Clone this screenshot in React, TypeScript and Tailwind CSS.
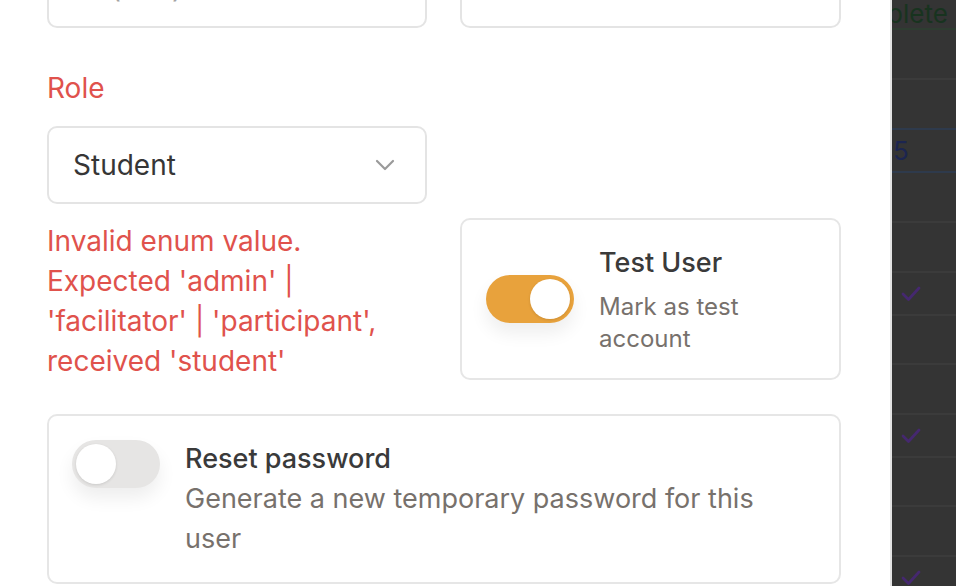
import { useState } from "react";

type Row = { h: string; line: string; content?: "plete" | "five" | "check" };

// dimmed table behind the sheet
const rows: Row[] = [
  { h: "h-[30px]", line: "border-[#2e3d31]", content: "plete" },
  { h: "h-[50px]", line: "border-[#3b3b3b]" },
  { h: "h-[50px]", line: "border-[#2e3a4c]" },
  { h: "h-[43px]", line: "border-[#2e3a4c]", content: "five" },
  { h: "h-[50px]", line: "border-[#3b3b3b]" },
  { h: "h-[50px]", line: "border-[#3b3b3b]" },
  { h: "h-[43px]", line: "border-[#3b3b3b]", content: "check" },
  { h: "h-[49px]", line: "border-[#3b3b3b]" },
  { h: "h-[50px]", line: "border-[#3b3b3b]" },
  { h: "h-[43px]", line: "border-[#3b3b3b]", content: "check" },
  { h: "h-[49px]", line: "border-[#3b3b3b]" },
  { h: "h-[50px]", line: "border-[#3b3b3b]" },
  { h: "h-[43px]", line: "border-[#3b3b3b]", content: "check" },
];

function Check() {
  return (
    <svg width="20" height="16" viewBox="0 0 20 16" fill="none">
      <path d="M2 8 7.5 13.5 18 2" stroke="#45286f" strokeWidth="2.8" strokeLinecap="round" strokeLinejoin="round" />
    </svg>
  );
}

function Toggle({ on, onChange }: { on: boolean; onChange: () => void }) {
  return (
    <button
      type="button"
      onClick={onChange}
      className={
        "relative h-[48px] w-[88px] shrink-0 rounded-full shadow-[0_10px_18px_rgba(0,0,0,0.07)] " +
        (on ? "bg-[#e8a23c]" : "bg-[#e6e5e4]")
      }
    >
      <span
        className={
          "absolute top-[4px] h-[40px] w-[40px] rounded-full bg-white shadow-[0_1px_3px_rgba(0,0,0,0.12)] " +
          (on ? "left-[44px]" : "left-[4px]")
        }
      />
    </button>
  );
}

export default function App() {
  const [testUser, setTestUser] = useState(true);
  const [resetPw, setResetPw] = useState(false);

  return (
    <div
      className="flex h-[586px] w-[956px] overflow-hidden bg-white"
      style={{ fontFamily: "Inter, 'Noto Sans', sans-serif" }}
    >
      {/* Sheet */}
      <div className="w-[892px] shrink-0 overflow-hidden border-r-2 border-[#e4e4e4] bg-white pl-[47px] pr-[49px]">
        {/* Phone / email row, scrolled mostly out of view */}
        <div className="-mt-[50px] grid grid-cols-[380px_381px] gap-[33px]">
          <div className="flex h-[78px] items-center rounded-[10px] border-2 border-[#e4e4e4] px-[24px] text-[28px] text-[#a3a3a3]">
            +1 (555) 123-4567
          </div>
          <div className="h-[78px] rounded-[10px] border-2 border-[#e4e4e4]" />
        </div>

        <div className="mt-[40px] grid grid-cols-[380px_381px] items-end gap-x-[33px]">
          <div>
            <label className="block text-[28px] leading-[40px] text-[#e0524c]">Role</label>
            <button
              type="button"
              className="mt-[18px] flex h-[78px] w-full items-center justify-between rounded-[10px] border-2 border-[#e4e4e4] pl-[24px] pr-[30px] text-[28px] text-[#363636]"
            >
              Student
              <svg width="20" height="12" viewBox="0 0 20 12" fill="none">
                <path d="M2 2 10 10 18 2" stroke="#9a9a9a" strokeWidth="2.2" strokeLinecap="round" strokeLinejoin="round" />
              </svg>
            </button>
            <p className="mt-[17px] text-[28px] leading-[40px] text-[#e0524c]">
              Invalid enum value. Expected 'admin' | 'facilitator' | 'participant', received 'student'
            </p>
          </div>

          <div className="mb-[1px] flex items-center gap-[25px] rounded-[10px] border-2 border-[#e6e6e6] px-[24px] py-[23px]">
            <Toggle on={testUser} onChange={() => setTestUser((v) => !v)} />
            <div className="pr-[4px]">
              <div className="text-[27px] font-medium leading-[40px] text-[#3a3a3a]">Test User</div>
              <div className="mt-[8px] text-[24px] leading-[32px] text-[#77716c]">Mark as test account</div>
            </div>
          </div>
        </div>

        {/* Reset password */}
        <div className="mt-[33px] flex items-start gap-[25px] rounded-[10px] border-2 border-[#e6e6e6] py-[23px] pl-[23px] pr-[24px]">
          <div className="pt-[1px]">
            <Toggle on={resetPw} onChange={() => setResetPw((v) => !v)} />
          </div>
          <div>
            <div className="text-[27px] font-medium leading-[40px] text-[#3a3a3a]">Reset password</div>
            <div className="text-[27px] leading-[40px] text-[#77716c]">
              Generate a new temporary password for this user
            </div>
          </div>
        </div>
      </div>

      {/* Dimmed table behind */}
      <div className="relative flex-1 overflow-hidden bg-[#343434]">
        {rows.map((r, i) => (
          <div key={i} className={"flex items-center border-b-2 " + r.h + " " + r.line}>
            {r.content === "plete" && (
              <span className="-ml-[5px] whitespace-nowrap text-[26px] leading-none text-[#18331f]">plete</span>
            )}
            {r.content === "five" && <span className="pl-[1px] text-[26px] text-[#1c2550]">5</span>}
            {r.content === "check" && (
              <span className="pl-[9px]">
                <Check />
              </span>
            )}
          </div>
        ))}
      </div>
    </div>
  );
}
